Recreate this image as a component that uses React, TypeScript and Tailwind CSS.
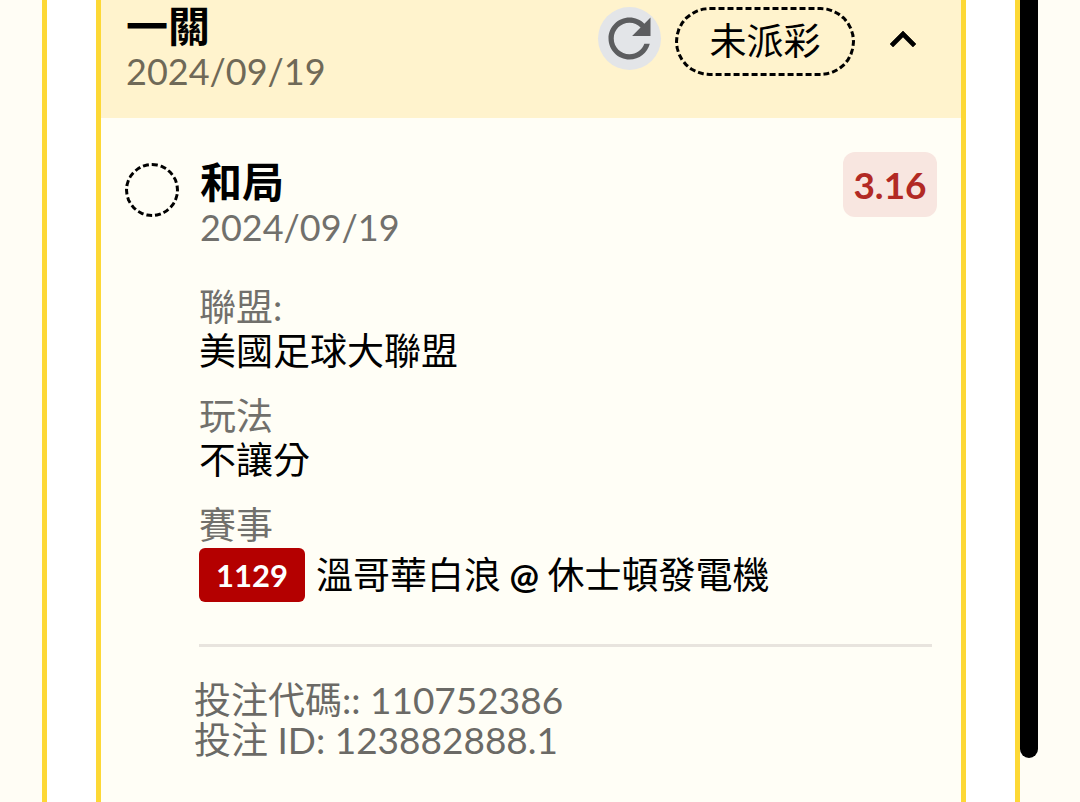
const details = [
  { label: "聯盟:", value: "美國足球大聯盟" },
  { label: "玩法", value: "不讓分" },
]

function RefreshIcon() {
  return (
    <svg viewBox="0 0 24 24" className="h-[63px] w-[63px]" fill="#5c5d5f" aria-hidden="true">
      <path d="M17.65 6.35C16.2 4.9 14.21 4 12 4c-4.42 0-7.99 3.58-7.99 8s3.57 8 7.99 8c3.73 0 6.84-2.55 7.73-6h-2.08c-.82 2.33-3.04 4-5.65 4-3.31 0-6-2.69-6-6s2.69-6 6-6c1.66 0 3.14.69 4.22 1.78L13 11h7V4l-2.35 2.35z" />
    </svg>
  )
}

function ChevronUp() {
  return (
    <svg viewBox="6 8 12 7.410" className="h-4 w-[26px]" aria-hidden="true">
      <path
        d="M12 8l-6 6 1.410 1.410L12 10.830l4.590 4.580L18 14z"
        stroke="#000"
        strokeWidth=".3"
      />
    </svg>
  )
}

export default function App() {
  return (
    <div className="flex min-h-screen bg-[#fffdf5] pr-[42px] pl-[42px] font-[Lato,'Noto_Sans_CJK_TC',sans-serif] text-[37px] leading-[44px] text-black">
      <main className="flex min-w-0 flex-1 border-x-5 border-[#fdd835] bg-white px-[49px]">
        <article className="min-w-0 flex-1 border-x-5 border-[#fdd835] bg-[#fffef6]">
          <header className="flex items-start justify-between bg-[#fff3cd] pt-[3px] pr-[25px] pb-[25px] pl-[25px]">
            <div>
              <h1 className="text-[42px] leading-[46px] font-bold">一關</h1>
              <p className="text-[36px] text-[#6f6957]">2024/09/19</p>
            </div>
            <div className="flex items-start pt-1">
              <button
                type="button"
                aria-label="重新整理"
                className="mr-[14px] rounded-full bg-[#e3e5e8]"
              >
                <RefreshIcon />
              </button>
              <span className="flex h-[69px] w-[180px] items-center justify-center rounded-full border-3 border-dashed border-black pb-[2px]">
                未派彩
              </span>
              <button
                type="button"
                aria-label="收合"
                className="mr-5 ml-[35px] flex h-[63px] items-center"
              >
                <ChevronUp />
              </button>
            </div>
          </header>

          <section className="flex items-start px-6 pt-[34px]">
            <span className="mt-[11px] h-[54px] w-[54px] shrink-0 rounded-full border-3 border-dashed border-black" />
            <div className="ml-[21px] min-w-0 flex-1 pt-[7px]">
              <h2 className="text-[42px] leading-[46px] font-bold">和局</h2>
              <p className="text-[36px] text-[#71706c]">2024/09/19</p>
            </div>
            <span className="flex h-[65px] w-[94px] items-center justify-center rounded-xl bg-[#f8e6e0] font-bold text-[#b22a24]">
              3.16
            </span>
          </section>

          <dl className="mt-9 flex flex-col gap-[21px] pl-[98px]">
            {details.map((item) => (
              <div key={item.label}>
                <dt className="text-[#71706c]">{item.label}</dt>
                <dd>{item.value}</dd>
              </div>
            ))}
            <div>
              <dt className="text-[#71706c]">賽事</dt>
              <dd className="flex items-center pt-px">
                <span className="mr-[11px] flex h-[54px] w-[106px] items-center justify-center rounded-md bg-[#b40000] text-[31px] font-bold text-white">
                  1129
                </span>
                <span>
                  溫哥華白浪<span className="text-[35px] font-bold"> @ </span>休士頓發電機
                </span>
              </dd>
            </div>
          </dl>

          <hr className="mt-[42px] mr-[29px] ml-[98px] border-t-3 border-[#e8e4de]" />

          <footer className="mt-[33px] pl-[93px] leading-[40px] text-[#6b6a66]">
            <p>投注代碼:: 110752386</p>
            <p>投注 ID: 123882888.1</p>
          </footer>
        </article>
      </main>

      {/* scroll thumb */}
      <div className="h-[758px] w-[18px] shrink-0 rounded-b-full bg-black" />
    </div>
  )
}
